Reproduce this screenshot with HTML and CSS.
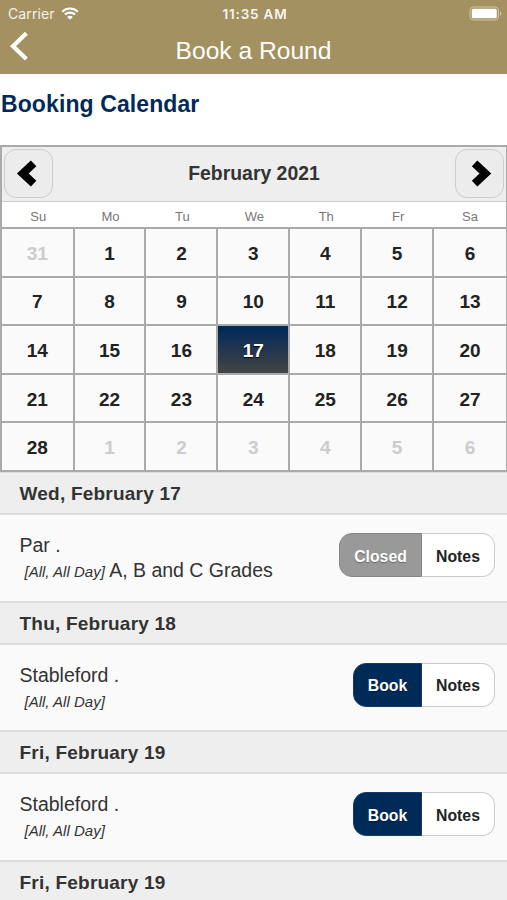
FILE: index.html
```
<!DOCTYPE html>
<html lang="en">
<head>
    <meta charset="UTF-8">
    <title>Book a Round</title>
    <link rel="stylesheet" href="styles.css">
</head>
<body>

<header class="header">
    <div class="status">
        <div class="carrier">
            <span>Carrier</span>
            <svg class="wifi" viewBox="0 0 18 13" width="18" height="13">
                <path d="M1.2 4.7C5.6.5 12.4.5 16.8 4.7M3.9 7.6c2.9-2.7 7.3-2.7 10.2 0" fill="none" stroke="#fff" stroke-width="2.1"/>
                <path d="M6.2 9.9c1.6-1.4 4-1.4 5.6 0L9 12.8z" fill="#fff"/>
            </svg>
        </div>
        <span class="time">11:35 AM</span>
        <svg class="battery" viewBox="0 0 33 15" width="33" height="15">
            <rect x="1" y="1" width="28.5" height="13" rx="3.5" fill="none" stroke="#cfc5a8" stroke-width="1"/>
            <rect x="2.8" y="2.8" width="25" height="9.5" rx="1.5" fill="#fff"/>
            <path d="M31 5.3c1.7.6 1.7 3.8 0 4.4z" fill="#cfc5a8"/>
        </svg>
    </div>
    <div class="titlebar">
        <svg class="back" viewBox="0 0 20 30" width="20" height="30">
            <path d="M18.4 2.2L5 15.2l13.4 12.9" fill="none" stroke="#fff" stroke-width="4.2"/>
        </svg>
        <h1>Book a Round</h1>
    </div>
</header>

<h2 class="page-title">Booking Calendar</h2>

<div class="calendar">
    <div class="cal-header">
        <button class="cal-btn" aria-label="Previous month">
            <svg viewBox="0 0 47 47" width="47" height="47"><path d="M28.6 13.4L17.8 23.5l10.8 10.1" fill="none" stroke="#000" stroke-width="8"/></svg>
        </button>
        <span class="month">February 2021</span>
        <button class="cal-btn" aria-label="Next month">
            <svg viewBox="0 0 47 47" width="47" height="47"><path d="M18.6 13.4l10.8 10.1-10.8 10.1" fill="none" stroke="#000" stroke-width="8"/></svg>
        </button>
    </div>
    <div class="weekdays">
        <span>Su</span><span>Mo</span><span>Tu</span><span>We</span><span>Th</span><span>Fr</span><span>Sa</span>
    </div>
    <div class="days">
        <span class="other">31</span><span>1</span><span>2</span><span>3</span><span>4</span><span>5</span><span>6</span>
        <span>7</span><span>8</span><span>9</span><span>10</span><span>11</span><span>12</span><span>13</span>
        <span>14</span><span>15</span><span>16</span><span class="selected">17</span><span>18</span><span>19</span><span>20</span>
        <span>21</span><span>22</span><span>23</span><span>24</span><span>25</span><span>26</span><span>27</span>
        <span>28</span><span class="other">1</span><span class="other">2</span><span class="other">3</span><span class="other">4</span><span class="other">5</span><span class="other">6</span>
    </div>
</div>

<div class="events">
    <h3 class="divider">Wed, February 17</h3>
    <div class="event">
        <div class="info">
            <p>Par .</p>
            <p><em>[All, All Day]</em> A, B and C Grades</p>
        </div>
        <div class="actions">
            <button class="btn closed">Closed</button><button class="btn notes">Notes</button>
        </div>
    </div>

    <h3 class="divider">Thu, February 18</h3>
    <div class="event">
        <div class="info">
            <p>Stableford .</p>
            <p><em>[All, All Day]</em></p>
        </div>
        <div class="actions">
            <button class="btn book">Book</button><button class="btn notes">Notes</button>
        </div>
    </div>

    <h3 class="divider">Fri, February 19</h3>
    <div class="event">
        <div class="info">
            <p>Stableford .</p>
            <p><em>[All, All Day]</em></p>
        </div>
        <div class="actions">
            <button class="btn book">Book</button><button class="btn notes">Notes</button>
        </div>
    </div>

    <h3 class="divider">Fri, February 19</h3>
</div>

</body>
</html>
```
FILE: styles.css
```
* {
    box-sizing: border-box;
}
body {
    margin: 0;
    height: 900px;
    overflow: hidden;
    background-color: #fff;
    font-family: "Liberation Sans", Arial, sans-serif;
    color: #333;
}
h1, h2, h3, p {
    margin: 0;
}
button {
    font-family: inherit;
    padding: 0;
}
svg {
    display: block;
}
.header {
    height: 74px;
    background-color: #a39161;
    color: #fff;
}
.status {
    display: grid;
    grid-template-columns: 1fr auto 1fr;
    align-items: center;
    height: 27px;
    padding: 0 5px 0 8px;
    font-family: Inter, "Liberation Sans", sans-serif;
    font-size: 14px;
}
.carrier {
    display: flex;
    align-items: center;
    gap: 6px;
    color: #f6f2e6;
    letter-spacing: 0.1px;
}
.time {
    font-weight: 600;
    font-size: 13.5px;
    letter-spacing: 0.8px;
    color: #f8f5ec;
}
.battery {
    justify-self: end;
}
.titlebar {
    display: grid;
    grid-template-columns: 20px 1fr 20px;
    height: 47px;
    padding: 0 8px;
}
.back {
    margin-top: 4px;
}
.titlebar h1 {
    text-align: center;
    font-weight: normal;
    font-size: 24.6px;
    line-height: 47px;
}
.page-title {
    height: 71px;
    padding-left: 1px;
    font-size: 23px;
    letter-spacing: 0.1px;
    line-height: 60px;
    color: #032a57;
}
.calendar {
    height: 327px;
    border: 2px solid #aaa;
    border-width: 2px 1px 0 2px;
}
.cal-header {
    display: flex;
    justify-content: space-between;
    align-items: flex-start;
    height: 55px;
    padding: 2px 2px 0;
    background-color: #eee;
    border-bottom: 1px solid #ccc;
}
.cal-btn {
    width: 49px;
    height: 49px;
    border: 1px solid #ccc;
    border-radius: 12px;
    background-color: #ececec;
}
.month {
    font-size: 19.4px;
    font-weight: bold;
    line-height: 49px;
}
.weekdays, .days {
    display: grid;
    grid-template-columns: 72.6px repeat(6, 1fr);
    text-align: center;
}
.weekdays {
    height: 25px;
    font-size: 13px;
    line-height: 29px;
    color: #777;
}
.days {
    height: 245px;
    grid-template-rows: repeat(5, 1fr);
    border-top: 2px solid #aaa;
    font-size: 19px;
    font-weight: bold;
    color: #222;
}
.days span {
    display: flex;
    align-items: center;
    justify-content: center;
    padding-top: 3px;
    border-right: 2px solid #aaa;
    border-bottom: 2px solid #aaa;
    background-color: #fafafa;
}
.days span:nth-child(7n) {
    border-right-width: 0;
}
.days .other {
    color: #ccc;
}
.days .selected {
    background: linear-gradient(#00285a, #444);
    color: #fff;
    text-shadow: 0 1px 1px #000;
}
.divider {
    height: 43.2px;
    padding-left: 19.5px;
    border-top: 1px solid #ddd;
    border-bottom: 2px solid #ddd;
    background-color: #eee;
    font-size: 19px;
    letter-spacing: 0.22px;
    line-height: 42px;
}
.event {
    display: flex;
    justify-content: space-between;
    height: 86.4px;
    padding: 18px 12px 0 19.5px;
    border-bottom: 1px solid #ddd;
    background-color: #fafafa;
}
.info {
    font-size: 19.5px;
    line-height: 25px;
}
.info em {
    padding-left: 5px;
    font-size: 15px;
}
.actions {
    display: flex;
    height: 44px;
}
.btn {
    padding-top: 3px;
    border: 1px solid #ccc;
    font-size: 15.8px;
    font-weight: bold;
}
.notes {
    width: 73px;
    border-left: 0;
    border-radius: 0 13px 13px 0;
    background-color: #fff;
    color: #222;
}
.closed, .book {
    border-radius: 13px 0 0 13px;
    color: #fff;
}
.closed {
    width: 83px;
    border-color: #858585;
    background-color: #999;
    text-shadow: 0 1px 1px #666;
}
.book {
    width: 69px;
    border-color: #173c66;
    background-color: #002b58;
    text-shadow: 0 1px 1px #001a38;
}
```
